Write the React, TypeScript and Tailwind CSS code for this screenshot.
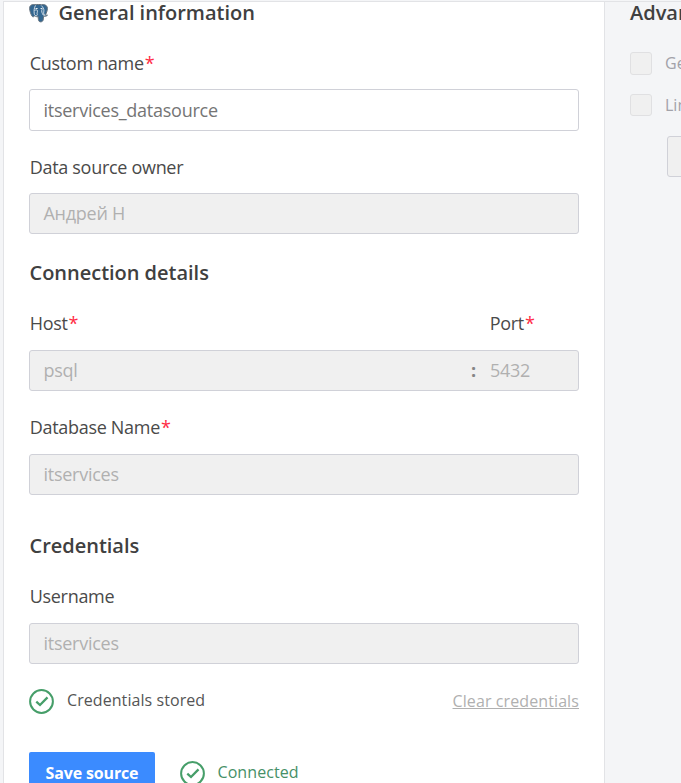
import type { ReactNode } from "react";

function Heading({ children, className = "" }: { children: ReactNode; className?: string }) {
  return (
    <h2 className={`flex h-5 items-center whitespace-nowrap text-[20px] leading-5 font-semibold tracking-[-0.02px] text-[#404040] ${className}`}>
      {children}
    </h2>
  );
}

function Label({ children, required, className = "" }: { children: ReactNode; required?: boolean; className?: string }) {
  return (
    <label className={`block h-[26px] whitespace-nowrap pl-[0.7px] text-[18px] leading-[26px] tracking-[-0.3px] text-[#4a4a4a] ${className}`}>
      {children}
      {required && <span className="ml-px text-[#ff2b44]">*</span>}
    </label>
  );
}

function Field({ children, className = "" }: { children: ReactNode; className?: string }) {
  return (
    <div className={`flex h-[41px] items-center rounded-[3px] border border-[#d0d1d8] bg-[#f0f0f0] pl-[13.5px] text-[18px] tracking-[-0.26px] text-[#b0b0b0] ${className}`}>
      {children}
    </div>
  );
}

function CheckCircle() {
  return (
    <svg className="size-[25px] shrink-0" viewBox="0 0 25 25" fill="none" stroke="#469e69" strokeWidth="2">
      <circle cx="12.5" cy="12.5" r="11.4" />
      <path d="M7.3 12.6 11 16l7.5-7.6" strokeWidth="2.3" />
    </svg>
  );
}

function Elephant() {
  return (
    <svg className="mr-[10.5px] h-[19px] w-[19px] shrink-0" viewBox="0 0 19 19" fill="none" strokeLinejoin="round" strokeLinecap="round">
      <path
        d="M6.200.8C3.400-.1.6 1 .6 4.300c0 2.300 1.300 6.200 2.500 7.900.8 1 1.700.7 2.600-.4 1 .9 2.300 1.100 3.400.8.300 1.900 0 3.900 1.200 4.900 1.200.8 3.300.3 3.800-1.300.4-1.300.3-2.800.5-4 1.500.3 3 0 3.900-1-.8-.2-1.600 0-2.100-.3C17.700 8.700 18.900 5 18.200 3 17.200.7 14.700.2 12.700.8 10.500.3 8 .3 6.200.8Z"
        fill="#336791"
        stroke="#66727d"
        strokeWidth="1"
      />
      <path
        d="M6.300 1.800C5 4.100 5 6.700 5.200 9.200c.1 1.300.4 2 1.300 2.400M6 6.200c1-.6 2.400-.5 2.500.6.1 1.300-.8 2.300-.2 3.600.2.800-.3 1.300-1.200 1.400M12.500 1.800c1.600 1.400 2.500 3.100 2.400 5-.1 1.500-.7 2.600.2 3.900M13 5.500c-1 1.700.2 3.700 1.200 5.500l1.800.3"
        stroke="#dfe7ed"
        strokeWidth="0.9"
      />
      <path d="M7 4.500h1.200M12 4.500h1" stroke="#fff" strokeWidth="0.9" />
    </svg>
  );
}

function Option({ children, className = "" }: { children: ReactNode; className?: string }) {
  return (
    <div className={`flex items-center gap-[13px] ${className}`}>
      <span className="h-full w-[22px] shrink-0 rounded-[3px] border border-[#e0e0e2] bg-[#f0f0f0]" />
      <span className="whitespace-nowrap pb-px text-[16px] text-[#a2a2a9]">{children}</span>
    </div>
  );
}

export default function App() {
  return (
    <div className="flex h-[783px] w-[681px] overflow-hidden bg-[#f4f5f7] pt-px font-['Open_Sans','Noto_Sans',sans-serif]">
      <main className="ml-[3px] h-[900px] w-[602px] shrink-0 border border-[#e2e3e6] bg-white pr-[25px] pl-[25px]">
        <Heading className="mt-px">
          <Elephant />
          General information
        </Heading>

        <Label required className="mt-[27px]">Custom name</Label>
        <Field className="mt-[13px] !h-[42px] !bg-white !text-[#757575]">itservices_datasource</Field>

        <Label className="mt-[23px]">Data source owner</Label>
        <Field className="mt-[13px]">Андрей Н</Field>

        <Heading className="mt-[29px] pl-[0.5px]">Connection details</Heading>
        <div className="mt-[27px] flex">
          <Label required className="w-[460px]">Host</Label>
          <Label required>Port</Label>
        </div>
        <Field className="mt-[14px]">
          <span className="w-[426.5px]">psql</span>
          <span className="w-[20px] pl-px font-bold text-[#858585]">:</span>
          <span>5432</span>
        </Field>

        <Label required className="mt-[23px]">Database Name</Label>
        <Field className="mt-[14px]">itservices</Field>

        <Heading className="mt-[41px] pl-[0.5px]">Credentials</Heading>
        <Label className="mt-[27px]">Username</Label>
        <Field className="mt-[14px]">itservices</Field>

        <div className="mt-[25px] flex h-[25px] items-center">
          <CheckCircle />
          <span className="ml-[13px] pb-[3px] text-[16px] tracking-[0.07px] text-[#555]">Credentials stored</span>
          <a className="ml-auto pb-px text-[16px] tracking-[0.1px] text-[#b0b0b0] underline">Clear credentials</a>
        </div>

        <div className="mt-[38px] flex h-[42px] items-center">
          <button className="h-full w-[126px] rounded-[2px] bg-[#3b8bff] text-[16px] font-bold tracking-[-0.15px] text-white">Save source</button>
          <span className="ml-[25px] flex items-center text-[16px] tracking-[0.08px] text-[#469067]">
            <CheckCircle />
            <span className="ml-[12.5px] pb-[2px]">Connected</span>
          </span>
        </div>
      </main>

      <aside className="h-[900px] w-[76px] shrink-0 overflow-hidden border-t border-[#e2e3e6] pl-[25px]">
        <Heading className="mt-px">Advanced settings</Heading>
        <Option className="mt-[29px] h-[23px]">Generate SQL</Option>
        <Option className="mt-[19px] h-[22px]">Limit rows</Option>
        <Field className="mt-5 ml-[37px] w-[120px]">{null}</Field>
      </aside>
    </div>
  );
}
